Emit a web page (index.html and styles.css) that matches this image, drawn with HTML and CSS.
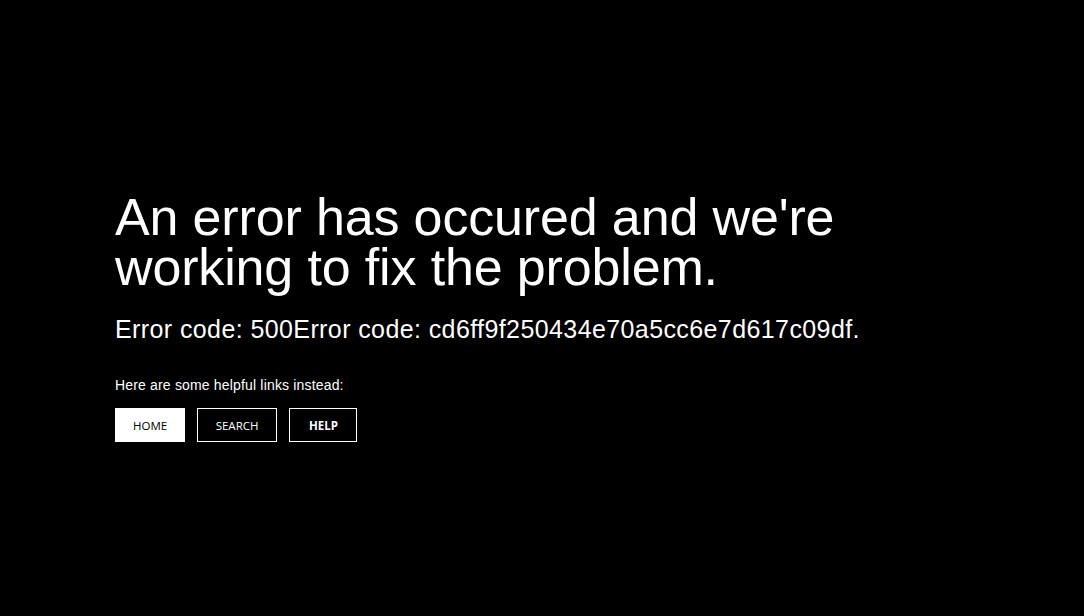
FILE: index.html
```html
<!DOCTYPE html>
<html lang="en">
<head>
<meta charset="utf-8">
<title>Error</title>
<link rel="stylesheet" href="styles.css">
</head>
<body>
<main class="page">
  <section class="content">
    <h1 class="title">An error has occured and we're<br>working to fix the problem.</h1>
    <p class="code">Error code: 500Error code: cd6ff9f250434e70a5cc6e7d617c09df.</p>
    <p class="helpful">Here are some helpful links instead:</p>
    <nav class="links">
      <a class="btn btn-primary" href="#">HOME</a>
      <a class="btn btn-search" href="#">SEARCH</a>
      <a class="btn btn-bold" href="#">HELP</a>
    </nav>
  </section>
</main>
</body>
</html>
```
FILE: styles.css
```css
html, body {
  margin: 0;
  padding: 0;
  background: #000;
  color: #fff;
  font-family: "Liberation Sans", Arial, sans-serif;
}
.page {
  width: 1084px;
  height: 616px;
  display: flex;
  align-items: flex-start;
  box-sizing: border-box;
  padding: 192px 0 0 115px;
}
.content {
  display: flex;
  flex-direction: column;
  align-items: flex-start;
}
.title {
  margin: 0;
  font-size: 52px;
  font-weight: 400;
  line-height: 50px;
  letter-spacing: -0.15px;
}
.code {
  margin: 22px 0 0;
  font-size: 25px;
  line-height: 30px;
  letter-spacing: 0.4px;
}
.helpful {
  margin: 32px 0 0;
  font-size: 14px;
  line-height: 18px;
  letter-spacing: 0.17px;
}
.links {
  display: flex;
  gap: 12px;
  margin-top: 14px;
}
.btn {
  display: flex;
  align-items: center;
  justify-content: center;
  height: 34px;
  box-sizing: border-box;
  border: 1px solid #fff;
  color: #fff;
  text-decoration: none;
  font-family: "Open Sans", sans-serif;
  font-size: 11.5px;
  padding: 0 17px;
}
.btn-primary {
  background: #fff;
  color: #000;
}
.btn-search {
  padding: 0 17.5px;
}
.btn-bold {
  font-weight: 700;
  padding: 0 18.5px;
  margin-left: 0.5px;
}
```
